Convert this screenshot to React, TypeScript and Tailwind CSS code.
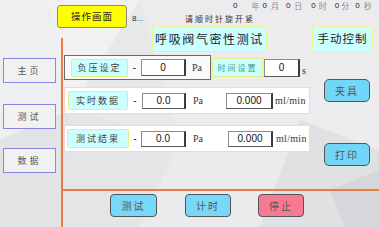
import React from 'react'

const cjk = "font-['Noto_Sans_CJK_SC',sans-serif]"
const serif = "font-['Liberation_Serif',serif]"
const sans = "font-['Liberation_Sans',sans-serif]"

function Label({ children, className = '' }: { children: React.ReactNode; className?: string }) {
  return (
    <div
      className={`flex items-center justify-center rounded-[2px] border border-[#e6ec8a] bg-[#ccffff] text-[9px] tracking-[2px] text-[#444] ${className}`}
    >
      {children}
    </div>
  )
}

function Field({ value, className = '' }: { value: string; className?: string }) {
  return (
    <div
      className={`flex items-center justify-center border border-[#8c8c8c] border-r-2 border-r-[#3a3a3a] border-b-[#5a5a5a] bg-white text-[10px] text-[#111] ${sans} ${className}`}
    >
      {value}
    </div>
  )
}

function NavButton({ children, className = '' }: { children: React.ReactNode; className?: string }) {
  return (
    <div
      className={`flex h-[25px] w-[53px] items-center justify-center border border-[#8a86e0] bg-[#f1f1f2] text-[9px] tracking-[3px] text-[#5a5a5a] ${className}`}
    >
      {children}
    </div>
  )
}

function BlueButton({ children, className = '' }: { children: React.ReactNode; className?: string }) {
  return (
    <div
      className={`flex h-[23px] items-center justify-center rounded-[4px] border border-[#555] text-[10px] tracking-[2px] text-[#555] ${className}`}
    >
      {children}
    </div>
  )
}

const dateParts: [string, string, boolean][] = [
  ['0', 'ml-[103px]', true],
  ['年', 'ml-[14px]', false],
  ['0', 'ml-[3px]', true],
  ['月', 'ml-[4px]', false],
  ['0', 'ml-[7px]', true],
  ['日', 'ml-[4px]', false],
  ['0', 'ml-[9px]', true],
  ['时', 'ml-[3px]', false],
  ['0', 'ml-[8px]', true],
  ['分', 'ml-[2px]', false],
  ['0', 'ml-[6px]', true],
  ['秒', 'ml-[4px]', false],
]

export default function App() {
  return (
    <div className={`relative h-[227px] w-[379px] overflow-hidden bg-[#e7e8ea] ${cjk}`}>
      {/* faceted backdrop */}
      <svg className="absolute inset-0" width="379" height="227" viewBox="0 0 379 227">
        <polygon points="0,0 48,0 70,110 0,140" fill="#eeeff0" />
        <polygon points="48,0 140,0 70,110" fill="#f1f1f2" />
        <polygon points="0,140 70,110 60,227 0,227" fill="#e2e3e5" />
        <polygon points="70,110 180,140 140,227 60,227" fill="#e4e5e7" />
        <polygon points="180,140 300,120 260,227 140,227" fill="#ebebed" />
        <polygon points="300,120 379,150 379,227 260,227" fill="#e0e1e3" />
        <polygon points="330,190 379,170 379,227 345,227" fill="#d6d7da" />
        <polygon points="140,0 379,0 379,150 300,120 180,140" fill="#ececee" />
      </svg>

      <div className="relative flex h-full flex-col">
        {/* header */}
        <div className="flex h-[52px]">
          <div className="ml-[57px] mt-[5px] flex h-[23px] w-[70px] items-center justify-center rounded-[3px] border border-[#8a8a8a] bg-[#ffff00] text-[9.5px] tracking-[1px] text-[#222]">
            操作画面
          </div>
          <div className="ml-[3px] flex flex-1 flex-col">
            <div className="flex h-[12px] items-center text-[8px] leading-none">
              {dateParts.map(([t, ml, num], i) => (
                <span key={i} className={`${ml} ${num ? `${sans} text-[#222]` : 'text-[#8a8a8a]'}`}>
                  {t}
                </span>
              ))}
            </div>
            <div className="flex h-[14px] items-center text-[8px] leading-none text-[#333]">
              <span className={`ml-[2px] w-[53px] ${sans}`}>8...</span>
              <span className="tracking-[2px]">请顺时针旋开紧</span>
            </div>
            <div className="flex h-[26px]">
              <div className="ml-[22px] flex h-[26px] w-[115px] items-center justify-center rounded-[2px] border border-[#eef29a] bg-[#ccffff] text-[12px] tracking-[1.6px] text-[#222]">
                呼吸阀气密性测试
              </div>
              <div className="ml-auto mr-[6px] flex h-[26px] w-[61px] items-center justify-center rounded-[2px] border border-[#eef29a] bg-[#ccffff] text-[11.5px] tracking-[1px] text-[#222]">
                手动控制
              </div>
            </div>
          </div>
        </div>

        {/* body */}
        <div className="-mt-[14px] flex h-[189px]">
          {/* side nav */}
          <div className="flex w-[61px] flex-col pl-[3px] pt-[20px]">
            <NavButton>主页</NavButton>
            <NavButton className="mt-[21px]">测试</NavButton>
            <NavButton className="mt-[19px]">数据</NavButton>
          </div>

          {/* main */}
          <div className="flex flex-1 flex-col border-l-2 border-[#f07a3c]">
            <div className="flex h-[153px] border-b-2 border-[#f07a3c]">
              <div className="flex w-[247px] flex-col pt-[17px]">
                {/* row 1 */}
                <div className="flex h-[25px] items-center">
                  <div className="ml-[1px] flex h-[25px] w-[147px] items-center border border-[#6a6a6a] bg-[#f9f9f9]">
                    <Label className="ml-[6px] h-[18px] w-[57px]">负压设定</Label>
                    <span className={`w-[13px] text-center text-[10px] text-[#222] ${sans}`}>-</span>
                    <Field value="0" className="h-[17px] w-[45px]" />
                    <span className={`ml-[6px] text-[10px] text-[#333] ${serif}`}>Pa</span>
                  </div>
                  <div className="ml-[1px] flex h-[19px] w-[51px] items-center justify-center border border-[#e6ec8a] bg-[#ccffff] text-[8px] tracking-[2px] text-[#3a9a8a]">
                    时间设置
                  </div>
                  <Field value="0" className="ml-[1px] h-[18px] w-[36px]" />
                  <span className={`ml-[2px] mt-[6px] text-[10px] text-[#333] ${serif}`}>s</span>
                </div>

                {/* row 2 */}
                <div className="ml-[1px] mt-[7px] flex h-[27px] w-[246px] items-center border border-[#f2d6d6] bg-white">
                  <Label className="ml-[3px] h-[19px] w-[60px]">实时数据</Label>
                  <span className={`w-[14px] text-center text-[10px] text-[#222] ${sans}`}>-</span>
                  <Field value="0.0" className="h-[16px] w-[44px]" />
                  <span className={`ml-[7px] w-[12px] text-[10px] text-[#333] ${serif}`}>Pa</span>
                  <Field value="0.000" className="ml-[21px] h-[16px] w-[47px]" />
                  <span className={`ml-[2px] text-[10px] tracking-[0.3px] text-[#333] ${serif}`}>ml/min</span>
                </div>

                {/* row 3 */}
                <div className="ml-[1px] mt-[11px] flex h-[27px] w-[246px] items-center border border-[#f2d6d6] bg-white">
                  <Label className="ml-[2px] h-[19px] w-[62px]">测试结果</Label>
                  <span className={`w-[12px] text-center text-[10px] text-[#222] ${sans}`}>-</span>
                  <Field value="0.0" className="h-[16px] w-[45px]" />
                  <span className={`ml-[7px] w-[12px] text-[10px] text-[#333] ${serif}`}>Pa</span>
                  <Field value="0.000" className="ml-[23px] h-[16px] w-[45px]" />
                  <span className={`ml-[3px] text-[10px] tracking-[0.3px] text-[#333] ${serif}`}>ml/min</span>
                </div>
              </div>

              <div className="ml-auto mr-[9px] flex flex-col pt-[41px]">
                <div className="flex h-[23px] w-[46px] items-center justify-center rounded-[5px] border border-[#555] bg-[#72d6f8] text-[10px] tracking-[2px] text-[#555]">
                  夹具
                </div>
                <div className="mt-[41px] flex h-[23px] w-[46px] items-center justify-center rounded-[5px] border border-[#555] bg-[#72d6f8] text-[10px] tracking-[2px] text-[#555]">
                  打印
                </div>
              </div>
            </div>

            {/* bottom buttons */}
            <div className="flex flex-1 items-start pt-[3px]">
              <BlueButton className="ml-[47px] w-[47px] bg-[#78d8fa]">测试</BlueButton>
              <BlueButton className="ml-[28px] w-[46px] bg-[#78d8fa]">计时</BlueButton>
              <BlueButton className="ml-[27px] w-[46px] bg-[#f67a92]">停止</BlueButton>
            </div>
          </div>
        </div>
      </div>
    </div>
  )
}
